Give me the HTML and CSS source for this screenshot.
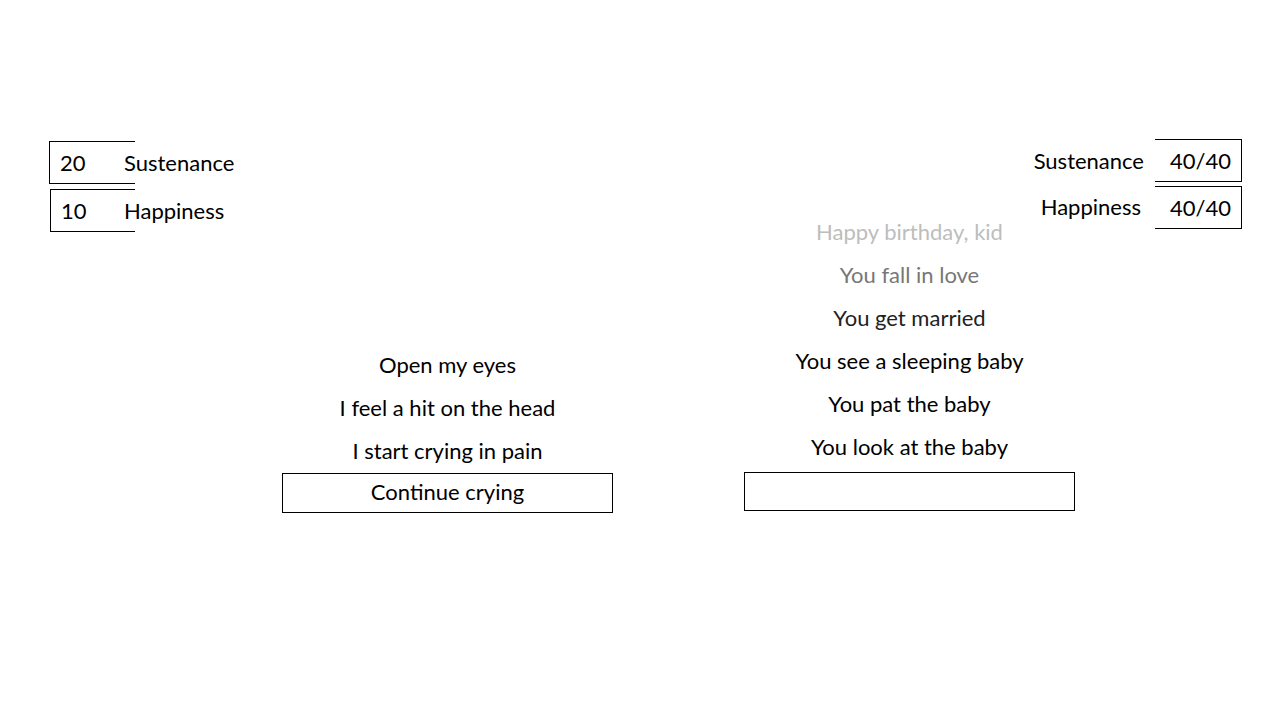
FILE: index.html
```html
<!DOCTYPE html>
<html>
<head>
<meta charset="utf-8">
<link rel="stylesheet" href="styles.css">
</head>
<body>
<main class="page">
  <section class="stats stats-left">
    <div class="stat-row">
      <div class="stat-box open-right">20</div>
      <span class="stat-label">Sustenance</span>
    </div>
    <div class="stat-row second">
      <div class="stat-box open-right">10</div>
      <span class="stat-label">Happiness</span>
    </div>
  </section>

  <section class="story story-left">
    <p class="line">Open my eyes</p>
    <p class="line">I feel a hit on the head</p>
    <p class="line">I start crying in pain</p>
    <button class="choice">Continue crying</button>
  </section>

  <section class="story story-right">
    <p class="line fade-1">Happy birthday, kid</p>
    <p class="line fade-2">You fall in love</p>
    <p class="line fade-3">You get married</p>
    <p class="line">You see a sleeping baby</p>
    <p class="line">You pat the baby</p>
    <p class="line">You look at the baby</p>
    <button class="choice empty"></button>
  </section>

  <section class="stats stats-right">
    <div class="stat-row">
      <span class="stat-label">Sustenance</span>
      <div class="stat-box open-left">40/40</div>
    </div>
    <div class="stat-row second">
      <span class="stat-label narrow">Happiness</span>
      <div class="stat-box open-left">40/40</div>
    </div>
  </section>
</main>
</body>
</html>
```
FILE: styles.css
```css
* { box-sizing: border-box; }
html, body {
  margin: 0;
  padding: 0;
  background: #ffffff;
}
body {
  font-family: "Lato", "Open Sans", sans-serif;
  font-size: 22px;
  color: #000;
}
.page {
  display: flex;
  width: 1280px;
  height: 720px;
  padding: 0 38px 0 49px;
}
.page > section { flex-shrink: 0; }
.stats {
  display: flex;
  flex-direction: column;
  padding-top: 141px;
}
.stats-left {
  width: 233px;
}
.stats-right {
  margin-left: auto;
  width: 167px;
  padding-top: 139px;
}
.stat-row {
  display: flex;
  align-items: center;
  height: 43px;
}
.stats-left .stat-row.second { margin-top: 5px; }
.stats-right .stat-row.second { margin-top: 4px; }
.stats-right .stat-row {
  justify-content: flex-end;
}
.stat-box {
  width: 86px;
  height: 43px;
  display: flex;
  align-items: center;
  flex-shrink: 0;
  padding-bottom: 1px;
}
.open-right {
  border: 1px solid #000;
  border-right: none;
  padding-left: 10px;
}
.stats-left .second .open-right { margin-left: 1px; width: 85px; }
.open-left {
  width: 87px;
  border: 1px solid #000;
  border-left: none;
  justify-content: flex-end;
  padding-right: 10px;
}
.stat-label {
  white-space: nowrap;
  flex-shrink: 0;
  padding-bottom: 1px;
}
.stats-left .stat-label { margin-left: -11px; }
.stats-right .stat-label { margin-right: 11px; }
.stats-right .stat-label.narrow { margin-right: 14px; padding-bottom: 3px; }

.story {
  display: flex;
  flex-direction: column;
  align-items: stretch;
  width: 331px;
}
.story-left {
  padding-top: 344px;
}
.story-right {
  margin-left: 131px;
  padding-top: 211px;
}
.line {
  margin: 0;
  height: 43px;
  line-height: 41px;
  text-align: center;
  white-space: nowrap;
}
.fade-1 { color: #bdbdbd; }
.fade-2 { color: #777777; }
.fade-3 { color: #222222; }
.choice {
  font: inherit;
  color: #000;
  background: #fff;
  border: 1px solid #000;
  height: 40px;
  padding: 0 0 3px 0;
  margin-top: 0;
}
.choice.empty {
  margin-top: 3px;
  height: 39px;
}
```
